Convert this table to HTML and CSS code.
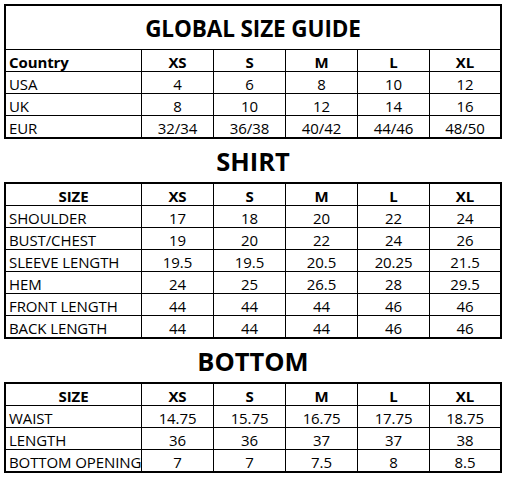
FILE: index.html
```html
<!DOCTYPE html>
<html>
<head>
<meta charset="utf-8">
<link rel="stylesheet" href="styles.css">
</head>
<body>
<main class="guide">
  <table class="chart">
    <colgroup><col class="c-label"><col class="c-size"><col class="c-size"><col class="c-size"><col class="c-size"><col class="c-last"></colgroup>
    <tr class="title-row"><td class="title-cell" colspan="6">GLOBAL SIZE GUIDE</td></tr>
    <tr class="head"><td class="label">Country</td><td>XS</td><td>S</td><td>M</td><td>L</td><td>XL</td></tr>
    <tr><td class="label">USA</td><td>4</td><td>6</td><td>8</td><td>10</td><td>12</td></tr>
    <tr><td class="label">UK</td><td>8</td><td>10</td><td>12</td><td>14</td><td>16</td></tr>
    <tr class="last"><td class="label">EUR</td><td>32/34</td><td>36/38</td><td>40/42</td><td>44/46</td><td>48/50</td></tr>
  </table>

  <h2 class="section-title">SHIRT</h2>
  <table class="chart">
    <colgroup><col class="c-label"><col class="c-size"><col class="c-size"><col class="c-size"><col class="c-size"><col class="c-last"></colgroup>
    <tr class="head"><td>SIZE</td><td>XS</td><td>S</td><td>M</td><td>L</td><td>XL</td></tr>
    <tr><td class="label">SHOULDER</td><td>17</td><td>18</td><td>20</td><td>22</td><td>24</td></tr>
    <tr><td class="label">BUST/CHEST</td><td>19</td><td>20</td><td>22</td><td>24</td><td>26</td></tr>
    <tr><td class="label">SLEEVE LENGTH</td><td>19.5</td><td>19.5</td><td>20.5</td><td>20.25</td><td>21.5</td></tr>
    <tr><td class="label">HEM</td><td>24</td><td>25</td><td>26.5</td><td>28</td><td>29.5</td></tr>
    <tr><td class="label">FRONT LENGTH</td><td>44</td><td>44</td><td>44</td><td>46</td><td>46</td></tr>
    <tr class="last"><td class="label">BACK LENGTH</td><td>44</td><td>44</td><td>44</td><td>46</td><td>46</td></tr>
  </table>

  <h2 class="section-title">BOTTOM</h2>
  <table class="chart">
    <colgroup><col class="c-label"><col class="c-size"><col class="c-size"><col class="c-size"><col class="c-size"><col class="c-last"></colgroup>
    <tr class="head"><td>SIZE</td><td>XS</td><td>S</td><td>M</td><td>L</td><td>XL</td></tr>
    <tr><td class="label">WAIST</td><td>14.75</td><td>15.75</td><td>16.75</td><td>17.75</td><td>18.75</td></tr>
    <tr><td class="label">LENGTH</td><td>36</td><td>36</td><td>37</td><td>37</td><td>38</td></tr>
    <tr class="last"><td class="label">BOTTOM OPENING</td><td>7</td><td>7</td><td>7.5</td><td>8</td><td>8.5</td></tr>
  </table>
</main>
</body>
</html>
```

FILE: styles.css
```css
html, body {
  margin: 0;
  padding: 0;
  background: #fff;
}

body {
  font-family: "Open Sans", "Liberation Sans", sans-serif;
  color: #000;
}

.guide {
  width: 498px;
  padding: 4px 0 0 4px;
}

.chart {
  width: 498px;
  table-layout: fixed;
  border-collapse: separate;
  border-spacing: 0;
  border: 2px solid #000;
}

.c-label { width: 136px; }
.c-size { width: 72px; }
.c-last { width: 70px; }

.chart tr {
  height: 22px;
}

.chart td {
  box-sizing: border-box;
  height: 22px;
  padding: 2px 0 0 0;
  border-right: 1px solid #000;
  border-bottom: 1px solid #000;
  font-size: 15px;
  letter-spacing: -0.1px;
  line-height: 18px;
  text-align: center;
  vertical-align: middle;
  white-space: nowrap;
  overflow: hidden;
}

.chart td:last-child {
  border-right: none;
}

.chart tr.last {
  height: 21px;
}

.chart tr.last td {
  height: 21px;
  border-bottom: none;
}

.chart td.label {
  text-align: left;
  padding-left: 3px;
}

.chart tr.head td {
  font-weight: 700;
}

.chart tr.title-row {
  height: 44px;
}

.chart td.title-cell {
  height: 44px;
  padding: 2px 0 0 0;
  font-size: 22.5px;
  font-weight: 700;
  line-height: 30px;
  text-align: center;
}

.section-title {
  margin: 0;
  height: 43px;
  line-height: 45px;
  font-size: 25.5px;
  font-weight: 700;
  text-align: center;
}
```
